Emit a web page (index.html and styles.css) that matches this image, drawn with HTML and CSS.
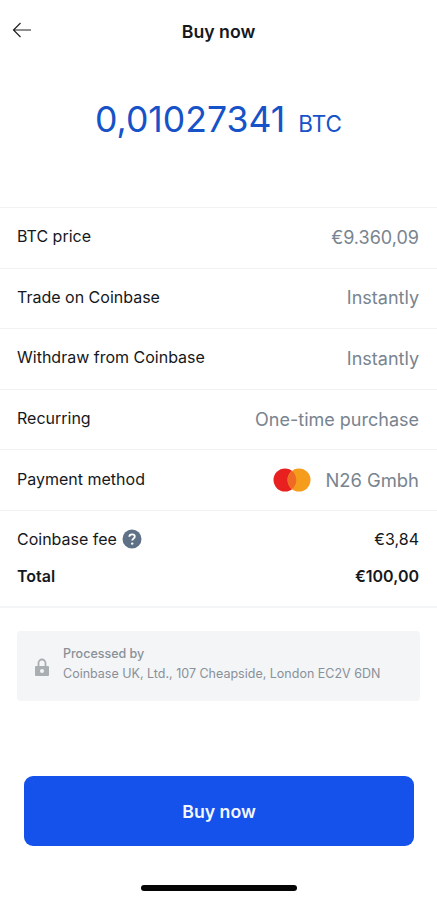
FILE: index.html
```html
<!DOCTYPE html>
<html lang="en">

<head>
    <meta charset="UTF-8">
    <meta name="viewport" content="width=device-width, initial-scale=1.0">
    <title>Buy now</title>
    <link rel="stylesheet" href="styles.css">
</head>

<body>
    <div class="screen">
        <div class="header">
            <svg class="back" width="20" height="16" viewBox="0 0 20 16">
                <path d="M19 8H1.5M8.5 1L1.5 8l7 7" fill="none" stroke="#222" stroke-width="1.2" />
            </svg>
            <div class="title">Buy now</div>
        </div>

        <div class="amount">0,01027341 <span class="unit">BTC</span></div>

        <ul class="rows">
            <li><span>BTC price</span><span class="val">€9.360,09</span></li>
            <li><span>Trade on Coinbase</span><span class="val">Instantly</span></li>
            <li><span>Withdraw from Coinbase</span><span class="val">Instantly</span></li>
            <li><span>Recurring</span><span class="val">One-time purchase</span></li>
            <li>
                <span>Payment method</span>
                <span class="val method">
                    <svg width="38" height="24" viewBox="0 0 38 24">
                        <circle cx="12" cy="12" r="11.5" fill="#e8201f" />
                        <circle cx="26" cy="12" r="11.5" fill="#f59c1c" />
                        <path d="M19 3a11.5 11.5 0 0 1 0 18a11.5 11.5 0 0 1 0-18z" fill="#ee6a25" />
                    </svg>
                    N26 Gmbh
                </span>
            </li>
        </ul>

        <div class="totals">
            <div class="line">
                <span class="fee">Coinbase fee
                    <svg width="20" height="20" viewBox="0 0 20 20">
                        <circle cx="10" cy="10" r="9.5" fill="#5f7186" />
                        <path d="M7.3 7.8c0-1.6 1.2-2.5 2.8-2.5s2.7.9 2.7 2.3c0 2-2.6 2-2.6 4" fill="none" stroke="#fff" stroke-width="1.8" />
                        <circle cx="10.2" cy="14.6" r="1.2" fill="#fff" />
                    </svg>
                </span>
                <span>€3,84</span>
            </div>
            <div class="line total"><span>Total</span><span>€100,00</span></div>
        </div>

        <div class="note">
            <svg class="lock" width="14" height="19" viewBox="0 0 14 19">
                <path d="M3.5 8V5a3.5 3.5 0 0 1 7 0v3" fill="none" stroke="#a9aeb2" stroke-width="1.8" />
                <path fill-rule="evenodd" d="M1 8h12a1 1 0 0 1 1 1v8a1 1 0 0 1-1 1H1a1 1 0 0 1-1-1V9a1 1 0 0 1 1-1zm6 3a2 2 0 1 0 0 4a2 2 0 0 0 0-4z" fill="#a9aeb2" />
            </svg>
            <div class="note-text">
                <div class="note-head">Processed by</div>
                <div>Coinbase UK, Ltd., 107 Cheapside, London EC2V 6DN</div>
            </div>
        </div>

        <div class="btn">Buy now</div>
        <div class="home"></div>
    </div>
</body>

</html>
```

FILE: styles.css
```css
* {
    padding: 0;
    margin: 0;
    list-style: none;
    box-sizing: border-box;
}

html,
body {
    background: #fff;
    font-family: "Inter", "Liberation Sans", sans-serif;
    color: #15181c;
}

.screen {
    display: flex;
    flex-direction: column;
    width: 437px;
    height: 900px;
    overflow: hidden;
}

/*header*/
.header {
    position: relative;
    height: 62px;
    padding-top: 21px;
}

.back {
    position: absolute;
    left: 12px;
    top: 22px;
}

.title {
    text-align: center;
    font-size: 17.7px;
    line-height: 21px;
    font-weight: 600;
}

/*amount*/
.amount {
    height: 145px;
    padding-top: 36px;
    text-align: center;
    font-size: 35.6px;
    line-height: 44px;
    color: #1652c8;
}

.unit {
    margin-left: 3px;
    font-size: 22.5px;
}

/*rows*/
.rows {
    border-top: 1px solid #f1f2f3;
}

.rows li {
    display: flex;
    justify-content: space-between;
    align-items: center;
    height: 60.6px;
    padding: 0 18px 3px 17px;
    border-bottom: 1px solid #f1f2f3;
    font-size: 16px;
}

.val {
    padding-top: 2px;
    color: #78848f;
    font-size: 18px;
}

.method {
    display: flex;
    align-items: center;
    gap: 14px;
    font-size: 18.4px;
}

/*totals*/
.totals {
    height: 97px;
    padding: 16px 18px 0 17px;
    border-bottom: 2px solid #f4f5f6;
    font-size: 16px;
}

.line {
    display: flex;
    justify-content: space-between;
    align-items: center;
    height: 24px;
}

.fee {
    display: flex;
    align-items: center;
    gap: 5px;
}

.total {
    margin-top: 13px;
    font-weight: 600;
}

/*note*/
.note {
    display: flex;
    align-items: center;
    gap: 14px;
    height: 70px;
    margin: 23px 17px 0;
    padding-left: 18px;
    border-radius: 4px;
    background: #f3f5f7;
    color: #8a9097;
    font-size: 12.5px;
    line-height: 20px;
}

.lock {
    margin-top: 3px;
}

.note-text {
    padding-bottom: 4px;
}

.note-head {
    font-weight: 500;
}

/*button*/
.btn {
    height: 70px;
    margin: 75px 23px 0 24px;
    border-radius: 9px;
    background: #1552ec;
    color: #f2f6ff;
    font-size: 17.7px;
    font-weight: 600;
    line-height: 71px;
    text-align: center;
}

.home {
    width: 156px;
    height: 6px;
    margin: 39px auto 0;
    border-radius: 3px;
    background: #050505;
}
```
